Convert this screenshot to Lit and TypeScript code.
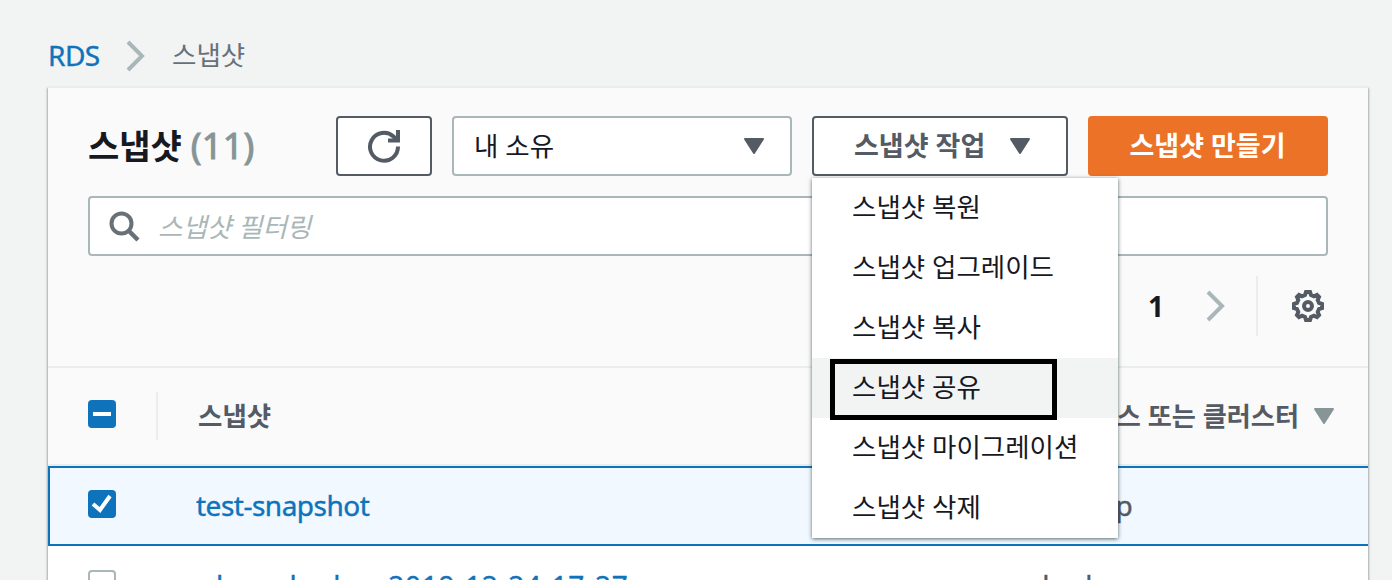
import { LitElement, html, css, svg } from "lit";
import { customElement } from "lit/decorators.js";

const caret = (cls: string) => svg`<svg class=${cls} width="22" height="18" viewBox="0 0 22 18"><path d="M2 2h18L11 16z" fill="currentColor" stroke="currentColor" stroke-width="2" stroke-linejoin="round"/></svg>`;

@customElement("app-root")
export class AppRoot extends LitElement {
  static styles = css`
    :host { display: block; height: 580px; overflow: hidden; background: #f2f3f3; color: #16191f;
      font-family: "Noto Sans", "Noto Sans CJK KR", sans-serif; font-size: 28px; line-height: 40px; }
    * { box-sizing: border-box; }
    svg { display: block; flex: none; }
    .ko { font-size: 26.5px; white-space: nowrap; }
    .crumbs { display: flex; align-items: center; height: 86px; padding: 25px 0 0 48px; }
    .link { color: #0f73bb; white-space: nowrap; letter-spacing: -0.5px; -webkit-text-stroke: 0.4px #0f73bb; }
    .crumbs .link { width: 78px; padding-bottom: 1px; }
    .crumbs .ko { color: #687078; margin-left: 26px; padding-bottom: 1px; }
    .panel { margin: 0 24px 0 48px; height: 494px; background: #fff; border-top: 2px solid #eaeded;
      box-shadow: 1px 2px 2px 0 rgba(0,28,36,.3), -1px 2px 2px 0 rgba(0,28,36,.3); }
    .head { background: #fafafa; height: 280px; padding: 28px 40px 0; border-bottom: 2px solid #eaeded; }
    .bar { display: flex; height: 60px; }
    .title { width: 248px; font-size: 34px; font-weight: 700; line-height: 60px; white-space: nowrap; }
    .count { color: #879596; font-weight: 400; font-size: 36px; letter-spacing: 0.3px; -webkit-text-stroke: 1px #879596; }
    .box { display: flex; align-items: center; height: 60px; background: #fff; border: 2px solid #aab7b8; border-radius: 4px; }
    .dark { border-color: #545b64; color: #545b64; font-weight: 700; }
    .refresh { width: 96px; padding-left: 29px; }
    .select { width: 340px; margin: 0 20px; padding: 0 25px 0 20px; justify-content: space-between; color: #16191f; }
    .slate { color: #545b64; }
    .anchor { position: relative; width: 256px; margin-right: 20px; }
    .action { padding-left: 40px; gap: 24px; }
    .action .ko { font-size: 27px; padding-bottom: 1px; }
    .create { width: 240px; background: #eb7226; border-radius: 4px; color: #fff; font-weight: 700; text-align: center; line-height: 59px; }
    .create.ko { font-size: 27px; padding-right: 1px; }
    .menu { position: absolute; z-index: 2; left: 0; top: 62px; width: 306px; background: #fff; box-shadow: 0 1px 4px 0 rgba(0,28,36,.65); }
    .item { height: 60px; line-height: 59px; padding-left: 40px; }
    .hot { background: #f2f3f3; }
    .frame { position: absolute; left: 18px; top: 181px; width: 227px; height: 61px; border: 5px solid #000; }
    .search { margin-top: 20px; padding-left: 19px; color: #aab7b8; font-style: italic; gap: 17px; }
    .search .ko { padding-top: 1px; }
    .pager { display: flex; justify-content: flex-end; align-items: center; height: 60px; margin: 20px 0 0; }
    .page { font-weight: 700; margin-right: 42px; }
    .rule { width: 2px; height: 60px; background: #eaeded; margin: 0 32px 0 30px; }
    .pager .gear { margin-right: 2px; }
    .thead { display: flex; align-items: center; height: 98px; padding: 0 33px 0 40px; background: #fafafa; border-bottom: 2px solid #eaeded; color: #545b64; font-weight: 700; }
    .cb { width: 28px; height: 28px; border-radius: 4px; background: #0f73bb; flex: none; }
    .thead .cb { margin-bottom: 4px; }
    .split { width: 2px; height: 48px; background: #eaeded; margin: 0 40px; }
    .grow { flex: 1; }
    .thead .end { margin-right: 14px; font-size: 26.2px; }
    .mist { color: #879596; }
    .row { display: flex; height: 80px; padding: 17px 0 0 38px; background: #f1f8ff; border: 2px solid #0f73bb; border-right: 0; align-items: flex-start; }
    .row .cb { margin-top: 5px; }
    .name { width: 799px; margin-left: 80px; }
    .cell { color: #545b64; white-space: nowrap; letter-spacing: -1.1px; -webkit-text-stroke: 0.4px #545b64; }
    .next { display: flex; padding: 19px 0 0 40px; align-items: flex-start; }
    .next .link { letter-spacing: -0.9px; }
    .next .stamp { letter-spacing: 0.75px; }
    .off { background: #fff; border: 2px solid #aab7b8; margin-top: 5px; }
  `;

  render() {
    const items = ["복원", "업그레이드", "복사", "공유", "마이그레이션", "삭제"];
    return html`
      <nav class="crumbs">
        <span class="link">RDS</span>
        <svg width="20" height="32" viewBox="0 0 20 32"><path d="M2 2l14 14L2 30" fill="none" stroke="#aab7b8" stroke-width="4"/></svg>
        <span class="ko">스냅샷</span>
      </nav>
      <section class="panel">
        <div class="head">
          <div class="bar">
            <div class="title">스냅샷 <span class="count">(11)</span></div>
            <div class="box dark refresh">
              <svg width="34" height="34" viewBox="0 0 34 34" fill="none" stroke="currentColor" stroke-width="4"><path d="M31 17.500A14 14 0 1 1 26.500 7.500L30 11"/><path d="M31 1v10.500H21"/></svg>
            </div>
            <div class="box select"><span class="ko">내 소유</span>${caret("slate")}</div>
            <div class="anchor">
              <div class="box dark action"><span class="ko">스냅샷 작업</span>${caret("slate")}</div>
              <div class="menu">
                ${items.map((t, i) => html`<div class="item ko ${i === 3 ? "hot" : ""}">스냅샷 ${t}</div>`)}
                <div class="frame"></div>
              </div>
            </div>
            <div class="create ko">스냅샷 만들기</div>
          </div>
          <div class="box search">
            <svg width="32" height="32" viewBox="0 0 32 32" fill="none" stroke="#687078" stroke-width="4"><circle cx="12.500" cy="13.500" r="10"/><path d="M19.500 20.500l9.500 9.500" stroke-width="4.500"/></svg>
            <span class="ko">스냅샷 필터링</span>
          </div>
          <div class="pager">
            <span class="page">1</span>
            <svg width="20" height="32" viewBox="0 0 20 32"><path d="M2 2l14 14L2 30" fill="none" stroke="#aab7b8" stroke-width="4"/></svg>
            <span class="rule"></span>
            <svg class="gear" width="36" height="34" viewBox="0 0 36 34" fill="none" stroke="#545b64" stroke-width="4"><path d="M16 3h4l1 3 3 1.300 3-1.300 2 2-1.300 3L29 14l3 1v4l-3 1-1.300 3 1.300 3-2 2-3-1.300L21 28l-1 3h-4l-1-3-3-1.300L9 28l-2-2 1.300-3L7 20l-3-1v-4l3-1 1.300-3L7 8l2-2 3 1.300L15 6z"/><circle cx="18" cy="17" r="4"/></svg>
          </div>
        </div>
        <div class="thead">
          <svg class="cb" viewBox="0 0 28 28"><path d="M5 14h18" stroke="#fff" stroke-width="4"/></svg>
          <span class="split"></span>
          <span class="ko grow">스냅샷</span>
          <span class="ko end">DB 인스턴스 또는 클러스터</span>${caret("mist")}
        </div>
        <div class="row">
          <svg class="cb" viewBox="0 0 28 28"><path d="M5 14l7 6L22 6" fill="none" stroke="#fff" stroke-width="4"/></svg>
          <span class="link name">test-snapshot</span>
          <span class="cell">ecs-backup</span>
        </div>
        <div class="next">
          <span class="cb off"></span>
          <span class="link name">rds:ecs-backup-<span class="stamp">2019-12-24-17-27</span></span>
          <span class="cell">ecs-backup</span>
        </div>
      </section>`;
  }
}
